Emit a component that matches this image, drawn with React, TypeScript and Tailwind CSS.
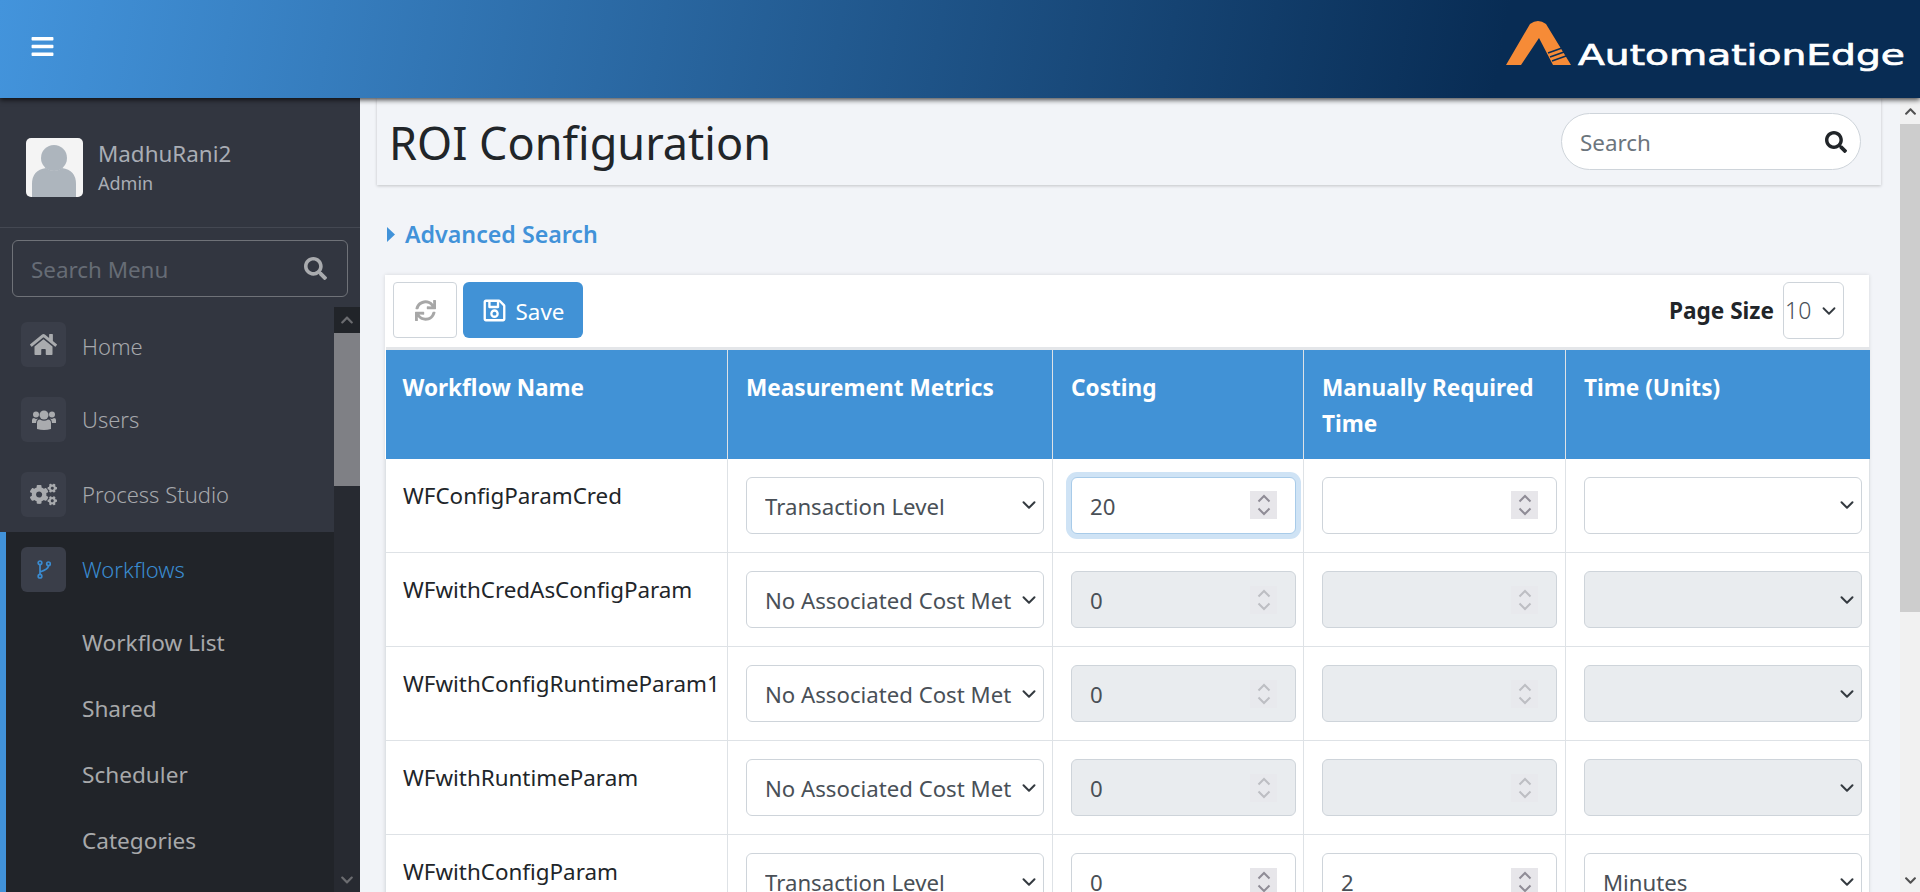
import React from "react";
import { FaBars, FaHome, FaCogs, FaSearch, FaSync, FaRegSave, FaChevronUp, FaChevronDown } from "react-icons/fa";
import { ChevronDown } from "lucide-react";

function Logo() {
  return (
    <svg width="402" height="60" viewBox="0 0 402 60" className="block">
      <path d="M0 46 L24 5 Q32 -1 40 5 L65 46 L47 46 L33 19 L15 46 Z" fill="#f68b37" />
      <path d="M42 34 L56 29 M44 38 L58 33 M46 42 L60 37" stroke="#0a2d55" strokeWidth="1.6" />
      <text x="72" y="46" fontFamily="'DejaVu Sans', sans-serif" fontSize="29" fontWeight="400" stroke="#fff" strokeWidth="0.7" fill="#fff" textLength="327" lengthAdjust="spacingAndGlyphs">AutomationEdge</text>
    </svg>
  );
}

function Avatar() {
  return (
    <svg width="57" height="59" viewBox="0 0 57 59" className="block rounded-[5px] bg-[#f4f4f4]">
      <circle cx="28" cy="20" r="13" fill="#adb5bd" />
      <path d="M6 59 V46 Q6 32 20 30 Q28 36 36 30 Q50 32 50 46 V59 Z" fill="#adb5bd" />
    </svg>
  );
}

function UsersIcon() {
  return (
    <svg width="24" height="22" viewBox="0 0 24 22" fill="#a9abae" className="block">
      <circle cx="12" cy="6" r="4.5" />
      <circle cx="4" cy="5.5" r="3" />
      <circle cx="20" cy="5.5" r="3" />
      <path d="M5 20 V14 Q5 10.5 8 10.5 Q12 13 16 10.5 Q19 10.5 19 14 V20 Q12 22 5 20 Z" />
      <path d="M0 14 V11 Q0 9 2 9 Q4 10.5 6 9.5 Q4 11 4 14 Z" />
      <path d="M24 14 V11 Q24 9 22 9 Q20 10.5 18 9.5 Q20 11 20 14 Z" />
    </svg>
  );
}

function BranchIcon() {
  return (
    <svg width="14" height="19" viewBox="0 0 14 19" fill="none" stroke="#3a8bd0" strokeWidth="1.7" className="block">
      <circle cx="3" cy="2.8" r="1.8" />
      <circle cx="3" cy="16.2" r="1.8" />
      <circle cx="11.5" cy="3.8" r="1.8" />
      <path d="M3 4.6 V14.4 M11.5 5.6 Q11.5 9.5 3 12" />
    </svg>
  );
}

function MenuItem({ icon, label, active, nudge }: { icon: React.ReactNode; label: string; active?: boolean; nudge?: boolean }) {
  return (
    <div className={"flex h-[75px] items-center " + (active ? "pl-[15px] border-l-[6px] border-[#4192d9] bg-[#212429]" : "pl-[21px]")}>
      <div className="flex h-[45px] w-[45px] items-center justify-center rounded-[6px] bg-[#3a3e49]">{icon}</div>
      <span className={"ml-[16px] text-[22px] font-light " + (nudge ? "pt-[4px] " : "") + (active ? "text-[#3a8bd0]" : "text-[#a6a8ac]")}>{label}</span>
    </div>
  );
}

function SubItem({ label }: { label: string }) {
  return <div className="flex h-[66px] items-center border-l-[6px] border-[#4192d9] pl-[76px] pt-[6px] text-[22.6px] text-[#a8a9ab]">{label}</div>;
}

function Sidebar() {
  return (
    <aside className="flex h-full w-[360px] shrink-0 flex-col bg-[#323640]">
      <div className="flex h-[130px] shrink-0 items-start border-b border-[#444852] pl-[26px] pt-[40px]">
        <Avatar />
        <div className="ml-[15px] flex flex-col">
          <span className="text-[22.4px] leading-[32px] text-[#a9adb5]">MadhuRani2</span>
          <span className="text-[18px] leading-[26px] text-[#a9adb5]">Admin</span>
        </div>
      </div>
      <div className="mx-[12px] mt-[12px] flex h-[57px] shrink-0 items-center justify-between rounded-[6px] border border-[#6f7278] pl-[18px] pr-[20px]">
        <span className="pt-[2px] text-[22.4px] text-[#666c75]">Search Menu</span>
        <FaSearch className="text-[23px] text-[#a9abae]" />
      </div>
      <div className="mt-[10px] flex min-h-0 flex-1">
        <nav className="min-w-0 flex-1 overflow-hidden">
          <MenuItem nudge icon={<FaHome className="text-[27px] text-[#a9abae]" />} label="Home" />
          <MenuItem icon={<UsersIcon />} label="Users" />
          <MenuItem icon={<FaCogs className="text-[27px] text-[#a9abae]" />} label="Process Studio" />
          <div className="bg-[#212429]">
            <MenuItem active icon={<BranchIcon />} label="Workflows" />
            <SubItem label="Workflow List" />
            <SubItem label="Shared" />
            <SubItem label="Scheduler" />
            <SubItem label="Categories" />
            <div className="h-[40px] border-l-[6px] border-[#4192d9]" />
          </div>
        </nav>
        <div className="flex w-[26px] shrink-0 flex-col bg-[#272a31]">
          <div className="flex h-[26px] items-center justify-center bg-[#212429]"><FaChevronUp className="text-[14px] text-[#6b6c70]" /></div>
          <div className="h-[153px] bg-[#7f8085]" />
          <div className="flex-1" />
          <div className="flex h-[25px] items-center justify-center"><FaChevronDown className="text-[14px] text-[#6b6c70]" /></div>
        </div>
      </div>
    </aside>
  );
}

function Spinner({ disabled }: { disabled?: boolean }) {
  return (
    <div className={"flex h-[28px] w-[27px] shrink-0 items-center justify-center " + (disabled ? "bg-[#e8e9ed] text-[#bdbec3]" : "bg-[#e7e6ea] text-[#8f8c96]")}>
      <svg width="14" height="24" viewBox="0 0 14 24" fill="none" stroke="currentColor" strokeWidth="2" className="block">
        <path d="M1.5 8.5 L7 3 L12.5 8.5" />
        <path d="M1.5 15.5 L7 21 L12.5 15.5" />
      </svg>
    </div>
  );
}

function NumberBox({ value, disabled, focused }: { value?: string; disabled?: boolean; focused?: boolean }) {
  return (
    <div
      className={
        "flex h-[57px] w-full items-center justify-between rounded-[6px] border pl-[18px] pr-[18px] text-[22.2px] text-[#495057] " +
        (disabled ? "border-[#ced4da] bg-[#e9ecef] " : focused ? "border-[#a8cbe9] bg-white shadow-[0_0_0_5px_#cfe3f5] " : "border-[#ced4da] bg-white ")
      }
    >
      <span className="pt-[2px]">{value}</span>
      <Spinner disabled={disabled} />
    </div>
  );
}

function SelectBox({ value, disabled }: { value?: string; disabled?: boolean }) {
  return (
    <div className={"flex h-[57px] w-full items-center rounded-[6px] border border-[#ced4da] pl-[18px] pr-[3px] text-[22.2px] text-[#495057] " + (disabled ? "bg-[#e9ecef]" : "bg-white")}>
      <span className="mr-[6px] min-w-0 flex-1 overflow-hidden whitespace-nowrap pt-[2px]">{value}</span>
      <ChevronDown className="h-[22px] w-[22px] shrink-0 text-[#343a40]" strokeWidth={2.2} />
    </div>
  );
}

type Row = { name: string; metric: string; cost?: string; time?: string; unit?: string; disabled?: boolean; focused?: boolean };

const rows: Row[] = [
  { name: "WFConfigParamCred", metric: "Transaction Level", cost: "20", focused: true },
  { name: "WFwithCredAsConfigParam", metric: "No Associated Cost Metric", cost: "0", disabled: true },
  { name: "WFwithConfigRuntimeParam1", metric: "No Associated Cost Metric", cost: "0", disabled: true },
  { name: "WFwithRuntimeParam", metric: "No Associated Cost Metric", cost: "0", disabled: true },
  { name: "WFwithConfigParam", metric: "Transaction Level", cost: "0", time: "2", unit: "Minutes" },
];

const heads = ["Workflow Name", "Measurement Metrics", "Costing", "Manually Required Time", "Time (Units)"];

function Table() {
  return (
    <table className="w-[1484px] table-fixed border-collapse">
      <colgroup>
        <col className="w-[342px]" />
        <col className="w-[325px]" />
        <col className="w-[251px]" />
        <col className="w-[262px]" />
        <col className="w-[304px]" />
      </colgroup>
      <thead>
        <tr className="h-[110px] bg-[#4192d6]">
          {heads.map((h) => (
            <th key={h} className="border-x border-t-[3px] border-x-[#dee2e6] border-t-[#e4e6e9] px-[18px] pt-[20px] align-top text-left text-[22.6px] font-bold leading-[36px] text-white first:border-l-0 first:pl-[17px] last:border-r-0">{h}</th>
          ))}
        </tr>
      </thead>
      <tbody>
        {rows.map((r) => (
          <tr key={r.name} className="h-[94px] border-b border-[#dee2e6]">
            <td className="border-x border-[#dee2e6] pl-[17px] pr-[18px] pt-[22px] align-top text-[22.4px] leading-[30px] whitespace-nowrap text-[#212529]">{r.name}</td>
            <td className="border-x border-[#dee2e6] pl-[18px] pr-[8px] align-middle"><SelectBox value={r.metric} /></td>
            <td className="border-x border-[#dee2e6] pl-[18px] pr-[7px] align-middle"><NumberBox value={r.cost} disabled={r.disabled} focused={r.focused} /></td>
            <td className="border-x border-[#dee2e6] pl-[18px] pr-[8px] align-middle"><NumberBox value={r.time} disabled={r.disabled} /></td>
            <td className="border-x border-[#dee2e6] pl-[18px] pr-[7px] align-middle"><SelectBox value={r.unit} disabled={r.disabled} /></td>
          </tr>
        ))}
      </tbody>
    </table>
  );
}

function Main() {
  return (
    <main className="min-w-0 flex-1 overflow-hidden bg-[#f2f4f8]">
      <div className="ml-[17px] mr-[19px] flex h-[87px] items-center justify-between pl-[12px] pr-[20px] shadow-[0_1px_3px_rgba(0,0,0,0.2)]">
        <h1 className="pt-[2px] text-[45px] font-normal leading-none text-[#212529]">ROI Configuration</h1>
        <div className="flex h-[57px] w-[300px] items-center justify-between rounded-full border border-[#ced4da] bg-white pl-[18px] pr-[13px]">
          <span className="pt-[2px] text-[22.4px] text-[#6c757d]">Search</span>
          <FaSearch className="text-[22px] text-[#212529]" />
        </div>
      </div>
      <div className="ml-[27px] mt-[34px] flex h-[30px] items-center gap-[10px] text-[23.2px] font-semibold text-[#4192d9]">
        <svg width="8" height="15" viewBox="0 0 8 15" fill="#4192d9" className="block"><path d="M0 0 L8 7.5 L0 15 Z" /></svg>
        <span>Advanced Search</span>
      </div>
      <section className="ml-[25px] mt-[26px] w-[1484px] bg-white shadow-[0_0_4px_rgba(0,0,0,0.12)]">
        <div className="flex h-[72px] items-start justify-between pl-[8px] pr-[25px] pt-[7px]">
          <div className="flex gap-[6px]">
            <div className="flex h-[56px] w-[64px] items-center justify-center rounded-[4px] border border-[#ced4da]"><FaSync className="text-[21px] text-[#a7a7a7]" /></div>
            <div className="flex h-[56px] w-[120px] items-center justify-center gap-[9px] rounded-[6px] bg-[#4192d6] text-[22.4px] text-white"><FaRegSave className="text-[25px]" /><span className="pt-[3px]">Save</span></div>
          </div>
          <div className="flex items-center gap-[9px]">
            <span className="text-[22.6px] font-bold text-[#212529]">Page Size</span>
            <div className="flex h-[57px] w-[61px] items-center justify-between rounded-[6px] border border-[#ced4da] pl-[1px] pr-[3px] text-[23px] font-light text-[#495057]">10<ChevronDown className="h-[22px] w-[22px] text-[#343a40]" strokeWidth={2} /></div>
          </div>
        </div>
        <Table />
      </section>
    </main>
  );
}

export default function App() {
  return (
    <div className="flex h-[892px] w-[1920px] flex-col overflow-hidden font-['Noto_Sans',sans-serif]">
      <header className="relative z-10 flex h-[98px] shrink-0 items-center justify-between bg-[linear-gradient(100deg,#4394dc_0%,#082c54_78%)] pl-[30px] pr-[12px] shadow-[0_2px_5px_rgba(0,0,0,0.7)]">
        <FaBars className="-mt-[6px] text-[25px] text-white" />
        <Logo />
      </header>
      <div className="flex min-h-0 flex-1">
        <Sidebar />
        <Main />
        <div className="flex w-[20px] shrink-0 flex-col bg-[#f1f1f1]">
          <div className="flex h-[26px] items-center justify-center"><FaChevronUp className="text-[13px] text-[#505050]" /></div>
          <div className="h-[488px] bg-[#cdcdcd]" />
          <div className="flex-1" />
          <div className="flex h-[24px] items-center justify-center"><FaChevronDown className="text-[13px] text-[#505050]" /></div>
        </div>
      </div>
    </div>
  );
}
